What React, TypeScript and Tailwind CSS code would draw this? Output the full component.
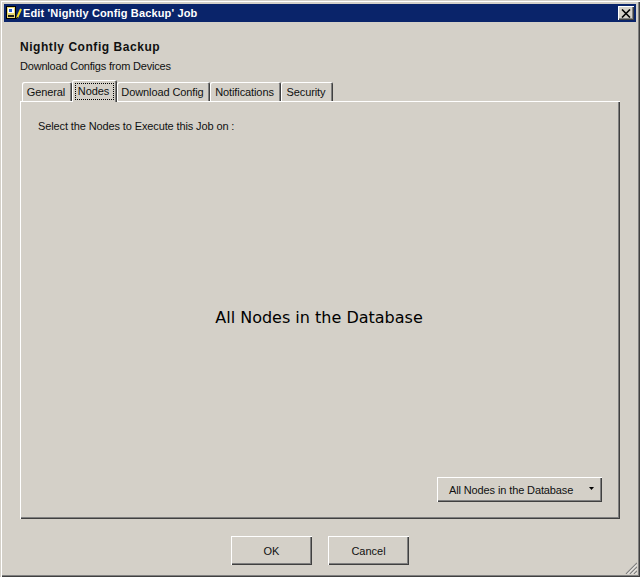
const tabs = [
  { label: 'General', width: 'w-[50px]' },
  { label: 'Nodes', width: 'w-[45px]', active: true },
  { label: 'Download Config', width: 'w-[93px]' },
  { label: 'Notifications', width: 'w-[71px]' },
  { label: 'Security', width: 'w-[52px]' },
]

const raised =
  'shadow-[inset_1px_1px_0_#ffffff,inset_-1px_-1px_0_#404040,inset_-2px_-2px_0_#808080]'

function AppIcon() {
  return (
    <svg width="16" height="14" viewBox="0 0 16 14" className="shrink-0">
      <rect x="0.5" y="0.5" width="9" height="12" fill="#e8d870" stroke="#000" />
      <rect x="2" y="2" width="6" height="5" fill="#fff" />
      <rect x="3" y="3" width="3" height="3" fill="#2a5fd0" />
      <rect x="2" y="9" width="6" height="2" fill="#202020" />
      <path d="M11 12 L15 3" stroke="#f8e020" strokeWidth="2" />
      <path d="M10.5 13 L11.5 11" stroke="#000" strokeWidth="1" />
    </svg>
  )
}

function CloseButton() {
  return (
    <div className={`w-[16px] h-[14px] bg-[#d4d0c8] flex items-center justify-center ${raised}`}>
      <svg width="10" height="9" viewBox="0 0 10 9">
        <path d="M1 0.5 L9 8.5 M9 0.5 L1 8.5" stroke="#000" strokeWidth="1.6" />
      </svg>
    </div>
  )
}

function Tab({ label, width, active }: { label: string; width: string; active?: boolean }) {
  if (active) {
    return (
      <div
        className={`${width} h-[22px] -mb-[1px] relative z-10 bg-[#d4d0c8] flex items-center justify-center rounded-t-[2px] shadow-[inset_1px_1px_0_#ffffff,inset_-1px_0_0_#404040,inset_-2px_0_0_#808080]`}
      >
        <span className="pr-[3px] pl-[1px] h-[17px] w-[39px] flex items-center justify-center border border-dotted border-black text-[#101010] tracking-[-0.1px]">
          {label}
        </span>
      </div>
    )
  }
  return (
    <div
      className={`${width} h-[19px] pt-[1px] pr-[2px] flex items-center justify-center rounded-t-[2px] text-[#101010] tracking-[-0.1px] shadow-[inset_1px_1px_0_#ffffff,inset_-1px_0_0_#404040,inset_-2px_0_0_#808080]`}
    >
      {label}
    </div>
  )
}

function PushButton({ label }: { label: string }) {
  return (
    <button className={`w-[81px] h-[29px] pt-[1px] bg-[#d4d0c8] text-[#101010] ${raised}`}>{label}</button>
  )
}

export default function App() {
  return (
    <div
      className={`relative w-[640px] h-[577px] bg-[#d4d0c8] flex flex-col pt-[4px] px-[4px] text-[11px] text-black font-['Liberation_Sans',sans-serif] overflow-hidden shadow-[inset_1px_1px_0_#d4d0c8,inset_2px_2px_0_#ffffff,inset_-1px_-1px_0_#404040,inset_-2px_-2px_0_#808080]`}
    >
      {/* Title bar */}
      <div className="h-[18px] w-[632px] shrink-0 bg-[#0a246a] flex items-center pl-[2px] pr-[2px] gap-[1px]">
        <AppIcon />
        <span className="pt-[1px] text-white font-bold text-[11px] tracking-[0.15px] flex-1 whitespace-nowrap">
          Edit 'Nightly Config Backup' Job
        </span>
        <CloseButton />
      </div>

      {/* Header */}
      <div className="pl-[16px] pt-[17px] shrink-0">
        <div className="h-[16px] leading-[16px] text-[12px] font-bold tracking-[0.55px] text-[#101010]">
          Nightly Config Backup
        </div>
        <div className="mt-[4px] h-[14px] leading-[14px] tracking-[-0.2px] text-[#101010]">
          Download Configs from Devices
        </div>
      </div>

      {/* Tabs */}
      <div className="ml-[18px] mt-[7px] h-[21px] shrink-0 flex items-end">
        {tabs.map((t) => (
          <Tab key={t.label} label={t.label} width={t.width} active={t.active} />
        ))}
      </div>

      {/* Panel */}
      <div className="ml-[16px] w-[600px] h-[418px] shrink-0 flex flex-col pl-[18px] pr-[18px] pt-[18px] pb-[17px] shadow-[inset_1px_1px_0_#ffffff,inset_-1px_-1px_0_#404040,inset_-2px_-2px_0_#808080]">
        <div className="h-[14px] leading-[14px] tracking-[-0.12px] text-[#101010]">Select the Nodes to Execute this Job on :</div>
        <div className="flex-1 flex items-center justify-center pt-[26px] pr-[2px] text-[16px] font-['DejaVu_Sans',sans-serif] text-black">
          All Nodes in the Database
        </div>
        <div className={`self-end w-[165px] h-[25px] flex items-center justify-between pl-[12px] pr-[8px] text-[#101010] ${raised}`}>
          <span className="pt-[2px] tracking-[-0.12px]">All Nodes in the Database</span>
          <svg width="5" height="3" viewBox="0 0 5 3" className="mb-[3px]">
            <path d="M0 0 H5 L2.5 3 Z" fill="#000" />
          </svg>
        </div>
      </div>

      {/* Footer */}
      <div className="mt-[17px] ml-[227px] flex gap-[16px]">
        <PushButton label="OK" />
        <PushButton label="Cancel" />
      </div>

      {/* Resize grip */}
      <svg width="12" height="12" viewBox="0 0 12 12" className="absolute right-[3px] bottom-[3px]">
        <path d="M1 12 L12 1 M5 12 L12 5 M9 12 L12 9" stroke="#808080" strokeWidth="1.2" />
        <path d="M2.5 12 L12 2.5 M6.5 12 L12 6.5 M10.5 12 L12 10.5" stroke="#ffffff" strokeWidth="0.8" />
      </svg>
    </div>
  )
}
